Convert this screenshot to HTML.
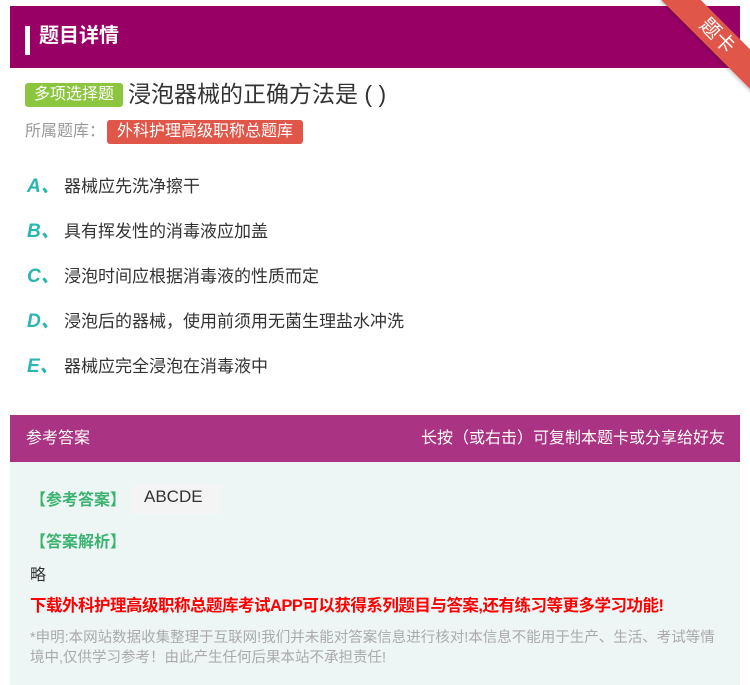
<!DOCTYPE html>
<html><head><meta charset="utf-8"><style>
*{margin:0;padding:0;box-sizing:border-box}
body{width:750px;height:685px;background:#fff;font-family:"Liberation Sans","Noto Sans CJK SC",sans-serif;position:relative;overflow:hidden}
.hdr{position:absolute;left:10px;top:6px;width:730px;height:62px;background:#990066}
.hdr .bar{position:absolute;left:15px;top:20px;width:5px;height:29px;background:#fff}
.hdr .t{position:absolute;left:29px;top:15px;color:#fff;font-size:20px;font-weight:bold;line-height:30px}
.rib{position:absolute;left:652px;top:22px;width:130px;height:28px;background:#e0574a;transform:rotate(45deg);color:#fff;font-size:20px;text-align:center;line-height:28px;box-shadow:0 2px 3px rgba(0,0,0,.2)}
.q{position:absolute;left:25px;top:79px;font-size:23px;color:#333;line-height:30px}
.tag{display:inline-block;background:#8cc63f;color:#fff;font-size:16px;padding:0 9px;border-radius:3px;line-height:24px;vertical-align:3px;margin-right:5px}
.lib{position:absolute;left:25px;top:120px;font-size:16px;color:#999;line-height:24px}
.lib span{display:inline-block;background:#e0574a;color:#fff;padding:0 10px;border-radius:3px;margin-left:2px}
.opt{position:absolute;left:27px;font-size:17px;color:#333;line-height:26px}
.opt b{color:#2bb5b0;font-style:italic;font-size:19px;display:inline-block;width:37px}
.ah{position:absolute;left:10px;top:415px;width:730px;height:47px;background:#ab3383;color:#fff;font-size:16px;line-height:47px}
.ab{position:absolute;left:10px;top:462px;width:730px;height:223px;background:#eef6f5}
.g{color:#3cb371;font-weight:bold;font-size:16px}
</style></head><body>
<div class="hdr"><div class="bar"></div><div class="t">题目详情</div></div>
<div class="rib">题卡</div>
<div class="q"><span class="tag">多项选择题</span>浸泡器械的正确方法是 ( )</div>
<div class="lib">所属题库：<span>外科护理高级职称总题库</span></div>
<div class="opt" style="top:174px"><b>A、</b>器械应先洗净擦干</div>
<div class="opt" style="top:219px"><b>B、</b>具有挥发性的消毒液应加盖</div>
<div class="opt" style="top:264px"><b>C、</b>浸泡时间应根据消毒液的性质而定</div>
<div class="opt" style="top:309px"><b>D、</b>浸泡后的器械，使用前须用无菌生理盐水冲洗</div>
<div class="opt" style="top:354px"><b>E、</b>器械应完全浸泡在消毒液中</div>
<div class="ah"><span style="position:absolute;left:16px">参考答案</span><span style="position:absolute;right:15px">长按（或右击）可复制本题卡或分享给好友</span></div>
<div class="ab">
<div class="g" style="position:absolute;left:20px;top:24px">【参考答案】</div>
<div style="position:absolute;left:122px;top:22px;width:90px;height:30px;background:#f4f4f4;font-size:17px;color:#333;padding:3px 12px">ABCDE</div>
<div class="g" style="position:absolute;left:20px;top:66px">【答案解析】</div>
<div style="position:absolute;left:20px;top:99px;font-size:16px;color:#333">略</div>
<div style="position:absolute;left:20px;top:130px;font-size:16.5px;color:#f00;font-weight:bold;letter-spacing:-0.5px">下载外科护理高级职称总题库考试APP可以获得系列题目与答案,还有练习等更多学习功能!</div>
<div style="position:absolute;left:20px;top:166px;width:690px;font-size:14.5px;color:#aaa;line-height:20px">*申明:本网站数据收集整理于互联网!我们并未能对答案信息进行核对!本信息不能用于生产、生活、考试等情境中,仅供学习参考！由此产生任何后果本站不承担责任!</div>
</div>
</body></html>
